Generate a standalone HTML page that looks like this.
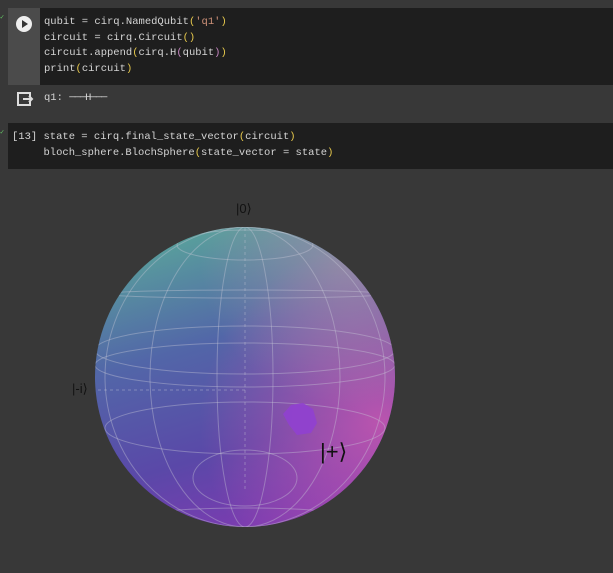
<!DOCTYPE html>
<html><head><style>
body{margin:0;width:613px;height:573px;background:#383838;overflow:hidden;position:relative;font-family:"Liberation Mono",monospace;}
.c{position:absolute;font-size:10.5px;color:#d4d4d4;white-space:pre;line-height:15.5px}
.y{color:#e6c84c}.p{color:#c586c0}.s{color:#ce9178}
</style></head><body>
<div style="position:absolute;left:8px;top:8px;width:605px;height:77px;background:#1e1e1e"></div>
<div style="position:absolute;left:8px;top:8px;width:32px;height:77px;background:#4b4b4b"></div>
<div style="position:absolute;left:16px;top:16px;width:16px;height:16px;border-radius:50%;background:#eee"></div>
<div style="position:absolute;left:22px;top:20px;width:0;height:0;border-left:6px solid #333;border-top:4px solid transparent;border-bottom:4px solid transparent"></div>
<div style="position:absolute;left:0;top:13px;font-size:7px;color:#6c6">✓</div>
<div style="position:absolute;left:0;top:128px;font-size:7px;color:#6c6">✓</div>
<div class="c" style="left:44px;top:15px">qubit = cirq.NamedQubit<span class="y">(</span><span class="s">'q1'</span><span class="y">)</span>
circuit = cirq.Circuit<span class="y">()</span>
circuit.append<span class="y">(</span>cirq.H<span class="p">(</span>qubit<span class="p">)</span><span class="y">)</span>
print<span class="y">(</span>circuit<span class="y">)</span></div>
<svg style="position:absolute;left:16px;top:91px" width="18" height="16"><path d="M6 2H2V14H14V10M2 2H14V6M7 8H16M13 5l3 3-3 3" stroke="#ddd" stroke-width="2" fill="none"/></svg>
<div class="c" style="left:44px;top:91px">q1: <span style="letter-spacing:-1px">───H───</span></div>
<div style="position:absolute;left:8px;top:123px;width:605px;height:46px;background:#1e1e1e"></div>
<div class="c" style="left:12px;top:130px">[13] state = cirq.final_state_vector<span class="y">(</span>circuit<span class="y">)</span>
     bloch_sphere.BlochSphere<span class="y">(</span>state_vector = state<span class="y">)</span></div>
<svg style="position:absolute;left:0;top:0" width="613" height="573">
<defs>
<linearGradient id="g" x1="0.2" y1="0" x2="0.5" y2="1">
<stop offset="0" stop-color="#5aa89a"/><stop offset="0.4" stop-color="#5266a8"/><stop offset="0.75" stop-color="#5a48a8"/><stop offset="1" stop-color="#7a3cb0"/>
</linearGradient>
<radialGradient id="h" cx="0.95" cy="0.65" r="0.6"><stop offset="0" stop-color="#d058b0" stop-opacity="0.8"/><stop offset="1" stop-color="#d058b0" stop-opacity="0"/></radialGradient>
<radialGradient id="t" cx="0.85" cy="0.1" r="0.5"><stop offset="0" stop-color="#b898a8" stop-opacity="0.6"/><stop offset="1" stop-color="#b898a8" stop-opacity="0"/></radialGradient>
<clipPath id="cp"><circle cx="245" cy="377" r="150"/></clipPath>
</defs>
<circle cx="245" cy="377" r="150" fill="url(#g)"/>
<circle cx="245" cy="377" r="150" fill="url(#h)"/>
<circle cx="245" cy="377" r="150" fill="url(#t)"/>
<g stroke="#c8c8d8" stroke-opacity="0.4" fill="none" stroke-width="1" clip-path="url(#cp)">
<ellipse cx="245" cy="245" rx="68" ry="15"/>
<ellipse cx="245" cy="294" rx="140" ry="4"/>
<ellipse cx="245" cy="350" rx="150" ry="24"/>
<ellipse cx="245" cy="365" rx="150" ry="22"/>
<ellipse cx="245" cy="428" rx="140" ry="26"/>
<ellipse cx="245" cy="478" rx="52" ry="28"/>
<ellipse cx="245" cy="520" rx="120" ry="12"/>
<ellipse cx="245" cy="377" rx="28" ry="150"/>
<ellipse cx="245" cy="377" rx="95" ry="150"/>
<ellipse cx="245" cy="377" rx="140" ry="150"/>
<line x1="245" y1="228" x2="245" y2="490" stroke-dasharray="3,3"/>
<line x1="98" y1="390" x2="245" y2="390" stroke-dasharray="3,3"/>
</g>
<path d="M283 414l8-9 12-2 10 6 4 14-6 10-14 2-8-10z" fill="#9040d0" opacity="0.9"/>
<text x="236" y="213" font-family="Liberation Sans" font-size="13" fill="#111">|0⟩</text>
<text x="72" y="393" font-family="Liberation Sans" font-size="13" fill="#111">|-i⟩</text>
<text x="320" y="459" font-family="Liberation Sans" font-size="22" fill="#111">|+⟩</text>
</svg>
</body></html>
